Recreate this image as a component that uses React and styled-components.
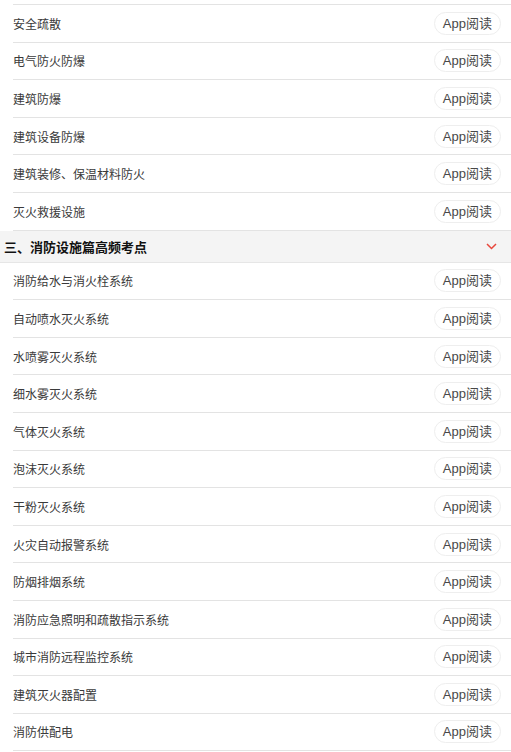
import React from 'react';
import styled, {createGlobalStyle} from 'styled-components';

const GlobalStyle = createGlobalStyle`
  html, body {
    margin: 0;
    padding: 0;
    background: #fff;
  }
  body {
    font-family: "Liberation Sans", "Noto Sans CJK SC", sans-serif;
    color: #333;
  }
`;

const Page = styled.div`
  width: 511px;
  padding-top: 4px;
`;

const List = styled.ul`
  list-style: none;
  margin: 0;
  padding: 0;
  border-top: ${props => props.first ? '1px solid #e3e3e3' : 'none'};
  margin-left: 13px;
`;

const Row = styled.li`
  height: 36.6px;
  border-bottom: 1px solid #e3e3e3;
  display: flex;
  align-items: center;
  justify-content: space-between;
  padding-right: 10px;
`;

const Title = styled.span`
  font-size: 12px;
  color: #3a3a3a;
`;

const ReadButton = styled.button`
  height: 23px;
  padding: 0 8px;
  border: 1px solid #eeeeee;
  border-radius: 12px;
  background: #fff;
  color: #484848;
  font-family: "Liberation Sans", "Noto Sans CJK SC", sans-serif;
  font-size: 13px;
  line-height: 21px;
  cursor: pointer;
`;

const SectionHeader = styled.div`
  height: 31px;
  background: #f4f4f4;
  border-bottom: 1px solid #e6e6e6;
  display: flex;
  align-items: center;
  justify-content: space-between;
  padding: 0 14px 0 4px;
`;

const SectionTitle = styled.span`
  font-size: 13px;
  font-weight: bold;
  color: #111;
`;

const Chevron = () => (
  <svg width="11" height="7" viewBox="0 0 11 7" fill="none">
    <path d="M1 1L5.5 5.5L10 1" stroke="#e8473c" strokeWidth="1.5" />
  </svg>
);

const before = [
  '安全疏散',
  '电气防火防爆',
  '建筑防爆',
  '建筑设备防爆',
  '建筑装修、保温材料防火',
  '灭火救援设施',
];

const after = [
  '消防给水与消火栓系统',
  '自动喷水灭火系统',
  '水喷雾灭火系统',
  '细水雾灭火系统',
  '气体灭火系统',
  '泡沫灭火系统',
  '干粉灭火系统',
  '火灾自动报警系统',
  '防烟排烟系统',
  '消防应急照明和疏散指示系统',
  '城市消防远程监控系统',
  '建筑灭火器配置',
  '消防供配电',
];

const Item = ({name}) => (
  <Row>
    <Title>{name}</Title>
    <ReadButton type="button">App阅读</ReadButton>
  </Row>
);

export default function App() {
  return (
    <Page>
      <GlobalStyle />
      <List first>
        {before.map(name => <Item name={name} key={name} />)}
      </List>
      <SectionHeader>
        <SectionTitle>三、消防设施篇高频考点</SectionTitle>
        <Chevron />
      </SectionHeader>
      <List>
        {after.map(name => <Item name={name} key={name} />)}
      </List>
    </Page>
  );
}
